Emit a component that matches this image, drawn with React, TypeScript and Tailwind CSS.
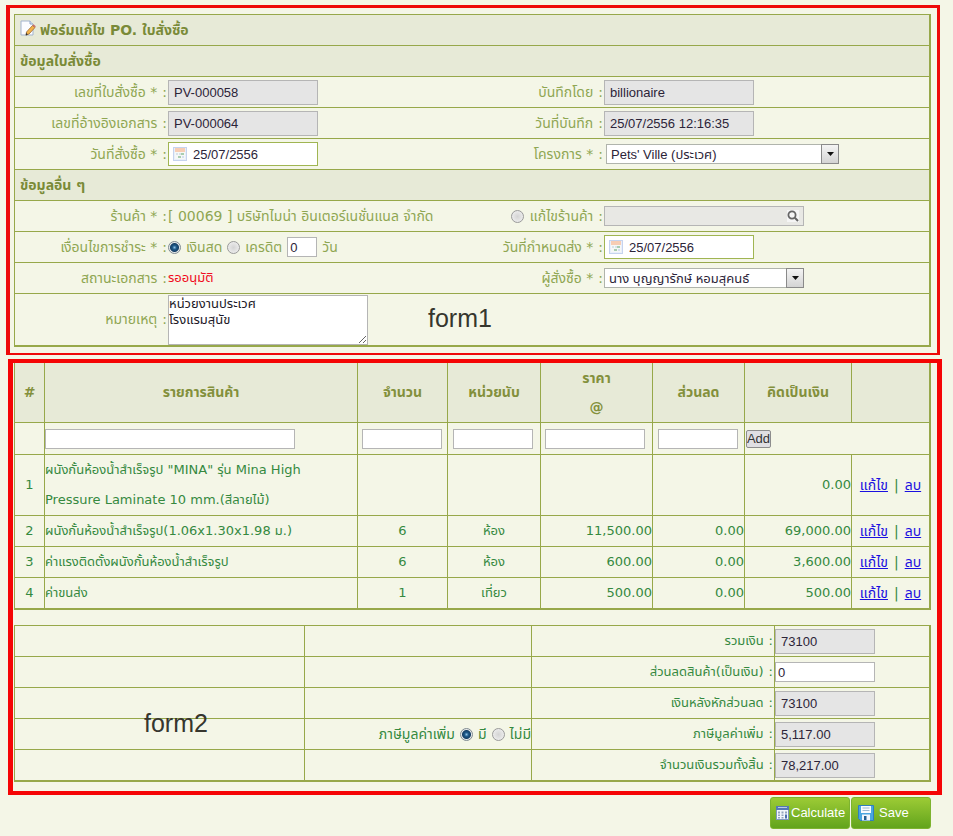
import type { ReactNode } from 'react'

const ui = 'font-["DejaVu_Sans","Noto_Sans_Thai","Noto_Sans",sans-serif]'
const field =
  'block border px-[5px] text-[13px] font-["Liberation_Sans","Noto_Sans_Thai",sans-serif] text-[#2c2438] rounded-none outline-none'

function ReadOnly({ id, value, wide = true }: { id: string; value: string; wide?: boolean }) {
  return (
    <input
      id={id}
      readOnly
      defaultValue={value}
      className={`${field} h-[25px] border-[#b5b5b5] bg-[#e5e5e5] ${wide ? 'w-[150px]' : 'w-[100px]'}`}
    />
  )
}

function CalendarIcon() {
  return (
    <svg width="14" height="14" viewBox="0 0 14 14" className="absolute top-[5px] left-[5px]" aria-hidden="true">
      <rect x=".5" y=".5" width="13" height="13" fill="#e9effa" stroke="#c6d3ee" />
      <rect x="2" y="1" width="10" height="4" fill="#f7cdb4" />
      <rect x="2" y="5" width="10" height="7" fill="#f6f8f6" />
      <path d="M3 6h2v2H3zM6 6h2v2H6z" fill="#d8e2ea" />
      <path d="M8 6h3v2H8zM5 9h3v2H5z" fill="#a9cdb0" />
      <path d="M9 9h2v2H9z" fill="#d5def0" />
    </svg>
  )
}

function DateField({ id, value }: { id: string; value: string }) {
  return (
    <span className="relative block w-[150px]">
      <input
        id={id}
        defaultValue={value}
        className="block h-6 w-full border border-[#a0b552] bg-white pl-6 font-['Liberation_Sans',sans-serif] text-[13px] text-[#2c2438] outline-none"
      />
      <CalendarIcon />
    </span>
  )
}

function Dropdown({ id, value, wide }: { id: string; value: string; wide?: boolean }) {
  return (
    <span className={`relative block ${wide ? 'ml-[2px] w-[233px]' : 'w-[200px]'}`}>
      <select id={id} className={`${field} h-5 w-full appearance-none border-[#b0b4ac] bg-white py-0 pr-5 pl-[4px]`}>
        <option>{value}</option>
      </select>
      <span className="pointer-events-none absolute top-0 right-0 flex h-5 w-[18px] items-center justify-center border border-[#8a8a8a] bg-linear-to-b from-[#f4f4f4] to-[#d4d4d4]">
        <svg width="7" height="4" viewBox="0 0 7 4" aria-hidden="true">
          <path d="M0 0h7L3.500 4z" fill="#111" />
        </svg>
      </span>
    </span>
  )
}

function Radio({ id, name, checked }: { id: string; name: string; checked?: boolean }) {
  return (
    <input
      type="radio"
      id={id}
      name={name}
      defaultChecked={checked}
      className="size-[13px] shrink-0 appearance-none rounded-full border border-[#9a9a9a] bg-[radial-gradient(circle,#d4d4d4,#f4f4f4)] checked:border-[#7f8a92] checked:bg-[radial-gradient(circle_at_50%_50%,#8fc0e4_0,#1f5a8a_2px,#163f66_4px,#e6e9ea_5px)]"
    />
  )
}

function Heading({ children }: { children: ReactNode }) {
  return (
    <h2 className="flex h-[31px] items-center gap-1 border-b border-[#97a84a] bg-[#e7ead7] px-[5px] text-[14px] font-bold text-[#7a8a38]">
      {children}
    </h2>
  )
}

function Row({ children, tall }: { children: ReactNode; tall?: boolean }) {
  return (
    <div
      className={`grid grid-cols-[153px_1fr_108px_325px] items-center ${tall ? 'h-[51px]' : 'h-[31px] border-b border-[#97a84a]'}`}
    >
      {children}
    </div>
  )
}

function Label({ htmlFor, children }: { htmlFor?: string; children: ReactNode }) {
  return (
    <label htmlFor={htmlFor} className="flex items-center justify-end gap-[5px] pr-px whitespace-nowrap">
      {children}
    </label>
  )
}

const items = [
  { name: 'ผนังกั้นห้องน้ำสำเร็จรูป "MINA" รุ่น Mina High Pressure Laminate 10 mm.(สีลายไม้)', qty: '', unit: '', price: '', discount: '', total: '0.00' },
  { name: 'ผนังกั้นห้องน้ำสำเร็จรูป(1.06x1.30x1.98 ม.)', qty: '6', unit: 'ห้อง', price: '11,500.00', discount: '0.00', total: '69,000.00' },
  { name: 'ค่าแรงติดตั้งผนังกั้นห้องน้ำสำเร็จรูป', qty: '6', unit: 'ห้อง', price: '600.00', discount: '0.00', total: '3,600.00' },
  { name: 'ค่าขนส่ง', qty: '1', unit: 'เที่ยว', price: '500.00', discount: '0.00', total: '500.00' },
]

const totals = [
  { id: 'sum', label: 'รวมเงิน', value: '73100' },
  { id: 'discount', label: 'ส่วนลดสินค้า(เป็นเงิน)', value: '0', editable: true },
  { id: 'after', label: 'เงินหลังหักส่วนลด', value: '73100' },
  { id: 'vat', label: 'ภาษีมูลค่าเพิ่ม', value: '5,117.00', vat: true },
  { id: 'grand', label: 'จำนวนเงินรวมทั้งสิ้น', value: '78,217.00' },
]

const cell = 'border-r border-b border-[#97a84a] p-0'
const box = 'block h-5 border border-[#b5b5b5] bg-white px-[2px] text-[13px] text-[#2c2438] outline-none font-["Liberation_Sans",sans-serif]'
const note = 'pointer-events-none absolute font-["Liberation_Sans",sans-serif] text-[25px] leading-7 text-[#36362e]'
const action =
  'flex h-8 w-20 items-center rounded-[3px] border border-[#7db32f] bg-linear-to-b from-[#9ccb35] to-[#62a41c] font-["Liberation_Sans",sans-serif] text-[13px] text-white'

export default function App() {
  return (
    <main className={`${ui} min-h-screen bg-[#f4f6e7] pt-[5px] pr-[11px] pb-[6px] pl-[6px] text-[14px] text-[#8fa653]`}>
      <form className="relative mr-[2px] border-t-3 border-r-3 border-b-2 border-l-4 border-[#ee0a0a] pt-[6px] pr-[6px] pb-[6px] pl-[4px]">
        <div className="border border-r-2 border-b-2 border-[#97a84a]">
          <Heading>
            <svg width="16" height="17" viewBox="0 0 16 17" className="-mt-1" aria-hidden="true">
              <path d="M1 1h9l3 3v11H1z" fill="#fbfcff" stroke="#a3b4cf" />
              <path d="M10 1v3h3" fill="#dfe7f4" stroke="#8fa5c5" />
              <path d="M6.500 12 12.500 5.500l2.500 2-6 6.500-3 1z" fill="#f5b347" stroke="#9a6a35" strokeWidth=".8" />
              <path d="m12.500 5.500 1-1.200 2.300 2-.8 1.200z" fill="#c9706c" />
              <path d="m6.500 12.500-.8 3 2-.8z" fill="#333" />
            </svg>
            ฟอร์มแก้ไข PO. ใบสั่งซื้อ
          </Heading>
          <Heading>ข้อมูลใบสั่งซื้อ</Heading>
          <Row>
            <Label htmlFor="po">เลขที่ใบสั่งซื้อ * <span>:</span></Label>
            <ReadOnly id="po" value="PV-000058" />
            <Label htmlFor="by">บันทึกโดย <span>:</span></Label>
            <ReadOnly id="by" value="billionaire" />
          </Row>
          <Row>
            <Label htmlFor="ref">เลขที่อ้างอิงเอกสาร <span>:</span></Label>
            <ReadOnly id="ref" value="PV-000064" />
            <Label htmlFor="saved">วันที่บันทึก <span>:</span></Label>
            <ReadOnly id="saved" value="25/07/2556 12:16:35" />
          </Row>
          <Row>
            <Label htmlFor="ordered">วันที่สั่งซื้อ * <span>:</span></Label>
            <DateField id="ordered" value="25/07/2556" />
            <Label htmlFor="project">โครงการ * <span>:</span></Label>
            <Dropdown id="project" value="Pets' Ville (ประเวศ)" wide />
          </Row>
          <Heading>ข้อมูลอื่น ๆ</Heading>
          <Row>
            <Label>ร้านค้า * <span>:</span></Label>
            <span className="whitespace-nowrap">[ 00069 ] บริษัทไมน่า อินเตอร์เนชั่นแนล จำกัด</span>
            <span className="flex items-center justify-end gap-[6px]">
              <Radio id="editshop" name="shop" />
              <Label htmlFor="editshop">แก้ไขร้านค้า <span>:</span></Label>
            </span>
            <span className="relative block w-[200px]">
              <input aria-label="แก้ไขร้านค้า" className={`${field} h-5 w-full border-[#b5b5b5] bg-[#e8e8e4]`} />
              <svg width="12" height="12" viewBox="0 0 12 12" className="absolute top-[4px] right-[5px] bg-[#f5f5f5]" aria-hidden="true">
                <circle cx="5" cy="5" r="3.600" fill="none" stroke="#666" strokeWidth="1.800" />
                <path d="m7.800 7.800 3.200 3.200" stroke="#666" strokeWidth="2" />
              </svg>
            </span>
          </Row>
          <Row>
            <Label>เงื่อนไขการชำระ * <span>:</span></Label>
            <span className="flex items-center gap-[5px] whitespace-nowrap">
              <Radio id="cash" name="term" checked />
              <label htmlFor="cash">เงินสด</label>
              <Radio id="credit" name="term" />
              <label htmlFor="credit">เครดิต</label>
              <input id="days" defaultValue="0" className={`${box} w-[30px]`} />
              <label htmlFor="days">วัน</label>
            </span>
            <Label htmlFor="due">วันที่กำหนดส่ง * <span>:</span></Label>
            <DateField id="due" value="25/07/2556" />
          </Row>
          <Row>
            <Label>สถานะเอกสาร <span>:</span></Label>
            <span className="text-[13px] text-[#f00a20]">รออนุมัติ</span>
            <Label htmlFor="buyer">ผู้สั่งซื้อ * <span>:</span></Label>
            <Dropdown id="buyer" value="นาง บุญญารักษ์ หอมสุคนธ์" />
          </Row>
          <Row tall>
            <Label htmlFor="remark">หมายเหตุ <span>:</span></Label>
            <textarea
              id="remark"
              defaultValue={'หน่วยงานประเวศ\nโรงแรมสุนัข'}
              className="block h-[50px] w-[200px] border border-[#b5b5b5] bg-white px-0 text-[13px] leading-4 text-[#1c1826] outline-none"
            />
          </Row>
        </div>
        <span className={`${note} top-[296px] left-[418px]`}>form1</span>
      </form>

      <form className="relative mt-1 ml-[2px] border-x-5 border-y-4 border-[#f50505] pr-[6px] pb-[9px] pl-px">
        <table className="w-full table-fixed border-separate border-spacing-0 border-r border-b border-l border-[#97a84a] text-[13px] text-[#35893f]">
          <colgroup>
            <col className="w-[30px]" />
            <col />
            <col className="w-[90px]" />
            <col className="w-[93px]" />
            <col className="w-[112px]" />
            <col className="w-[92px]" />
            <col className="w-[107px]" />
            <col className="w-[78px]" />
          </colgroup>
          <thead>
            <tr className="h-[60px] bg-[#e7ead7] text-[14px] text-[#83903c]">
              <th className={cell}>#</th>
              <th className={cell}>รายการสินค้า</th>
              <th className={cell}>จำนวน</th>
              <th className={cell}>หน่วยนับ</th>
              <th className={`${cell} leading-[29px]`}>ราคา<br />@</th>
              <th className={cell}>ส่วนลด</th>
              <th className={cell}>คิดเป็นเงิน</th>
              <th className={cell} />
            </tr>
          </thead>
          <tbody>
            <tr className="h-8">
              <td className={cell} />
              <td className={cell}><input aria-label="รายการสินค้า" className={`${box} w-[250px]`} /></td>
              <td className={cell}><input aria-label="จำนวน" className={`${box} ml-1 w-20`} /></td>
              <td className={cell}><input aria-label="หน่วยนับ" className={`${box} ml-[5px] w-20`} /></td>
              <td className={cell}><input aria-label="ราคา" className={`${box} ml-1 w-[100px]`} /></td>
              <td className={cell}><input aria-label="ส่วนลด" className={`${box} ml-[5px] w-20`} /></td>
              <td className={cell} colSpan={2}>
                <button type="button" className="ml-px block h-[18px] w-[25px] rounded-[2px] border border-[#8d8d8d] bg-[#e0dfe3] font-['Liberation_Sans',sans-serif] text-[13px] leading-4 text-[#333]">
                  <span className="-mx-1">Add</span>
                </button>
              </td>
            </tr>
            {items.map((item, i) => (
              <tr key={item.name} className={i === 0 ? 'h-[61px]' : 'h-[31px]'}>
                <td className={`${cell} text-center`}>{i + 1}</td>
                <td className={`${cell} leading-[30px]`}><div className="max-w-[270px]">{item.name}</div></td>
                <td className={`${cell} text-center`}>{item.qty}</td>
                <td className={`${cell} text-center`}>{item.unit}</td>
                <td className={`${cell} text-right`}>{item.price}</td>
                <td className={`${cell} text-right`}>{item.discount}</td>
                <td className={`${cell} text-right`}>{item.total}</td>
                <td className={`${cell} text-center text-[14px] whitespace-nowrap`}>
                  <a href="#edit" className="text-[#1a10e0] underline">แก้ไข</a>
                  <span className="px-[6px]">|</span>
                  <a href="#delete" className="text-[#1a10e0] underline">ลบ</a>
                </td>
              </tr>
            ))}
          </tbody>
        </table>

        <table className="mt-[15px] w-full table-fixed border-separate border-spacing-0 border border-[#97a84a] text-[13px] text-[#35893f]">
          <colgroup>
            <col />
            <col className="w-[227px]" />
            <col className="w-[243px]" />
            <col className="w-[155px]" />
          </colgroup>
          <tbody>
            {totals.map((t) => (
              <tr key={t.id} className="h-[31px]">
                <td className={cell} />
                <td className={cell}>
                  {t.vat && (
                    <div className="flex items-center justify-end gap-[5px] text-[14px]">
                      <span>ภาษีมูลค่าเพิ่ม</span>
                      <Radio id="vat-yes" name="vat" checked />
                      <label htmlFor="vat-yes">มี</label>
                      <Radio id="vat-no" name="vat" />
                      <label htmlFor="vat-no">ไม่มี</label>
                    </div>
                  )}
                </td>
                <td className={cell}>
                  <Label htmlFor={t.id}>{t.label} <span>:</span></Label>
                </td>
                <td className={cell}>
                  {t.editable ? (
                    <input id={t.id} defaultValue={t.value} className={`${box} w-[100px]`} />
                  ) : (
                    <ReadOnly id={t.id} value={t.value} wide={false} />
                  )}
                </td>
              </tr>
            ))}
          </tbody>
        </table>
        <span className={`${note} top-[346px] left-[131px]`}>form2</span>
      </form>

      <div className="mt-[2px] mr-[11px] flex justify-end gap-px">
        <button type="button" className={`${action} gap-[2px] pl-[5px]`}>
          <svg width="13" height="14" viewBox="0 0 13 14" className="shrink-0" aria-hidden="true">
            <rect x=".5" y=".5" width="12" height="13" fill="#f3f6fc" stroke="#7f97bd" />
            <rect x="0" y="0" width="13" height="4" fill="#5578b4" />
            <path d="M2 1.500h9" stroke="#b9cae6" />
            <path d="M2 5.500h2v2H2zM5.500 5.500h2v2h-2zM9 5.500h2v2H9zM2 8.500h2v1.500H2zM5.500 8.500h2v1.500h-2zM2 11h2v1.500H2zM5.500 11h2v1.500h-2z" fill="#93a3bd" />
            <path d="M9 8.500h2v4H9z" fill="#4d6fae" />
          </svg>
          Calculate
        </button>
        <button type="submit" className={`${action} gap-[5px] pl-[6px]`}>
          <svg width="16" height="16" viewBox="0 0 16 16" className="shrink-0" aria-hidden="true">
            <path d="M.5.500h15v15H2.500l-2-2z" fill="#4aa6e0" stroke="#2f7fc0" />
            <path d="M3 1h10v7H3z" fill="#f8fbfe" />
            <path d="M4.500 3h7M4.500 5.500h7" stroke="#9bb9d0" />
            <path d="M4 9.500h8v6H4z" fill="#f2f6fa" />
            <path d="M6 11h2.500v4H6z" fill="#235f90" />
          </svg>
          Save
        </button>
      </div>
    </main>
  )
}
